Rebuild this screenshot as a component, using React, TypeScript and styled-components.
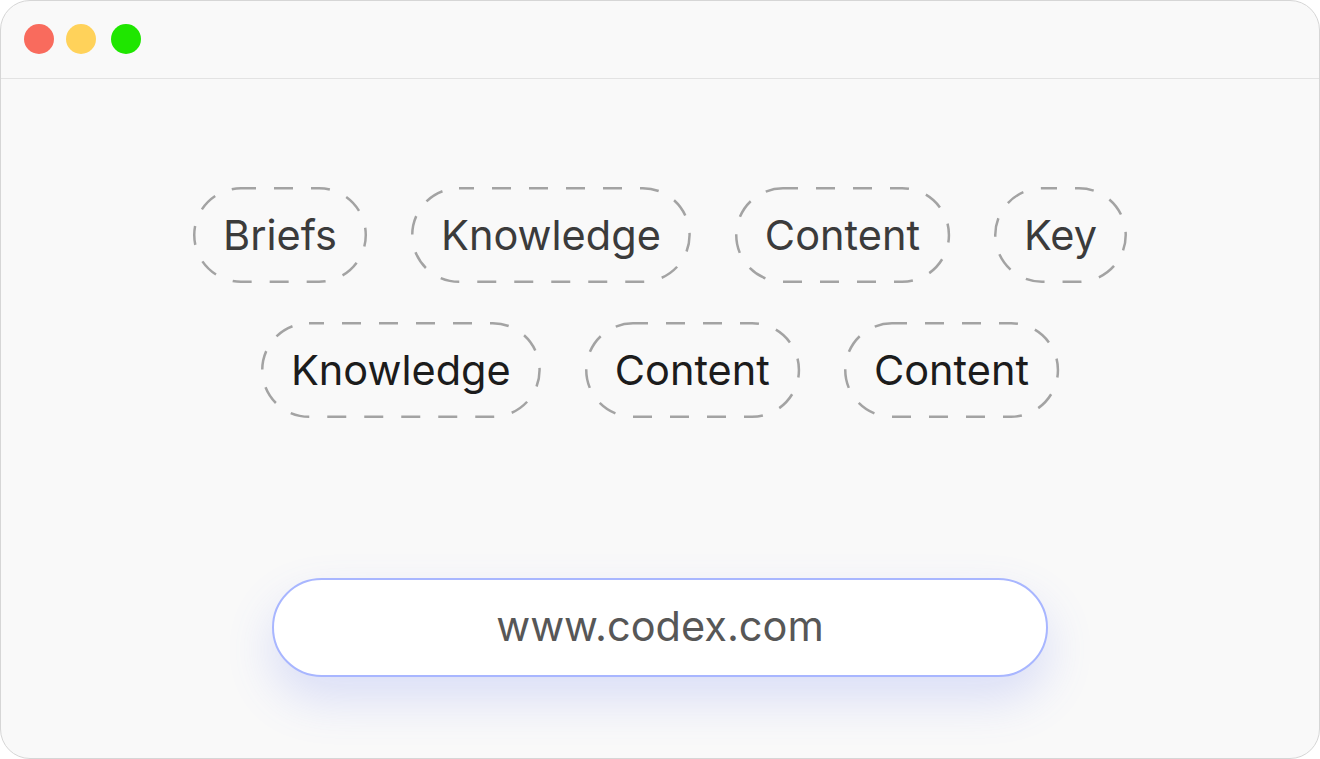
import styled, { createGlobalStyle } from "styled-components";

const GlobalStyle = createGlobalStyle`
  html, body {
    margin: 0;
    padding: 0;
    background: #ffffff;
  }
  body {
    font-family: Inter, "Noto Sans", "Liberation Sans", sans-serif;
  }
`;

const Window = styled.div`
  box-sizing: border-box;
  width: 1320px;
  height: 759px;
  background: #f9f9f9;
  border: 1.5px solid #d6d6d6;
  border-radius: 30px;
  overflow: hidden;
  display: flex;
  flex-direction: column;
`;

const TitleBar = styled.div`
  box-sizing: border-box;
  height: 78px;
  border-bottom: 1.5px solid #e3e3e3;
  display: flex;
  align-items: flex-start;
  padding: 23px 0 0 23px;
  gap: 12px;
`;

const Dot = styled.span<{ $color: string; $extra?: number }>`
  width: 30px;
  height: 30px;
  border-radius: 50%;
  background: ${(p) => p.$color};
  margin-left: ${(p) => p.$extra || 0}px;
`;

const Body = styled.div`
  flex: 1;
  display: flex;
  flex-direction: column;
  align-items: center;
  padding-top: 108px;
`;

const Row = styled.div`
  display: flex;
  gap: 44px;
  justify-content: center;
  & + & {
    margin-top: 39px;
  }
`;

const PillBox = styled.div<{ $dark?: boolean }>`
  position: relative;
  box-sizing: border-box;
  height: 96px;
  padding: 0 30px;
  display: flex;
  align-items: center;
  font-size: 41.5px;
  color: ${(p) => (p.$dark ? "#1c1c1c" : "#3b3b3b")};
  white-space: nowrap;
`;

const Outline = styled.svg`
  position: absolute;
  inset: 0;
  width: 100%;
  height: 100%;
  overflow: visible;
  pointer-events: none;
`;

const Pill = ({ label, dark }: { label: string; dark?: boolean }) => (
  <PillBox $dark={dark}>
    <Outline>
      <rect
        x="1.25"
        y="1.25"
        width="calc(100% - 2.5px)"
        height="93.5"
        rx="46.75"
        fill="none"
        stroke="#a3a3a3"
        strokeWidth="2.5"
        strokeDasharray="19 18"
        strokeDashoffset="4"
      />
    </Outline>
    {label}
  </PillBox>
);

const UrlBar = styled.div`
  box-sizing: border-box;
  margin-top: 160px;
  width: 776px;
  height: 99px;
  border-radius: 50px;
  background: #ffffff;
  border: 2px solid #a8b6ff;
  box-shadow: 0 22px 48px rgba(95, 115, 240, 0.2);
  display: flex;
  align-items: center;
  justify-content: center;
  padding-bottom: 4px;
  font-size: 41.5px;
  color: #575757;
`;

const rowOne = ["Briefs", "Knowledge", "Content", "Key"];
const rowTwo = ["Knowledge", "Content", "Content"];

export default function App() {
  return (
    <>
      <GlobalStyle />
      <Window>
        <TitleBar>
          <Dot $color="#f96b5d" />
          <Dot $color="#ffd25a" />
          <Dot $color="#1fe600" $extra={3} />
        </TitleBar>
        <Body>
          <Row>
            {rowOne.map((t, i) => (
              <Pill key={i} label={t} />
            ))}
          </Row>
          <Row>
            {rowTwo.map((t, i) => (
              <Pill key={i} label={t} dark />
            ))}
          </Row>
          <UrlBar>www.codex.com</UrlBar>
        </Body>
      </Window>
    </>
  );
}
